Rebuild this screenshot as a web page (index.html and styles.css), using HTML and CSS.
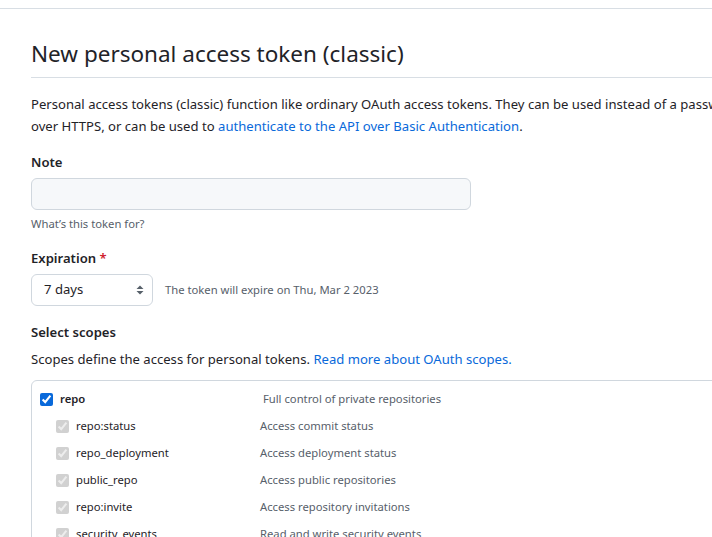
FILE: index.html
```html
<!DOCTYPE html>
<html lang="en">
<head>
<meta charset="utf-8">
<title>New personal access token (classic)</title>
<link rel="stylesheet" href="styles.css">
</head>
<body>
<div class="topbar"></div>
<main class="main">
  <div class="subhead">
    <h1 class="subhead-title">New personal access token (classic)</h1>
  </div>
  <p class="intro">Personal access tokens (classic) function like ordinary OAuth access tokens. They can be used instead of a password for Git<br>over HTTPS, or can be used to <a href="#" class="link">authenticate to the API over Basic Authentication</a>.</p>

  <div class="form-group">
    <label class="form-label">Note</label>
    <div class="input"></div>
    <p class="note">What’s this token for?</p>
  </div>

  <div class="form-group form-group-exp">
    <label class="form-label">Expiration <span class="req">*</span></label>
    <div class="exp-row">
      <div class="select">
        <span>7 days</span>
        <svg class="select-arrows" width="8" height="12" viewBox="0 0 8 12"><path d="M4 1.5 7.5 5h-7z M4 10.5 0.5 7h7z" fill="#57606a"/></svg>
      </div>
      <span class="exp-note">The token will expire on Thu, Mar 2 2023</span>
    </div>
  </div>

  <div class="form-group form-group-scopes">
    <label class="form-label">Select scopes</label>
    <p class="scopes-desc">Scopes define the access for personal tokens. <a href="#" class="link">Read more about OAuth scopes.</a></p>
    <div class="scopes-box">
      <div class="scope-row scope-parent">
        <label class="scope-name"><input type="checkbox" checked><span>repo</span></label>
        <span class="scope-desc">&nbsp;Full control of private repositories</span>
      </div>
      <div class="scope-row scope-child">
        <label class="scope-name"><input type="checkbox" checked disabled><span>repo:status</span></label>
        <span class="scope-desc">Access commit status</span>
      </div>
      <div class="scope-row scope-child">
        <label class="scope-name"><input type="checkbox" checked disabled><span>repo_deployment</span></label>
        <span class="scope-desc">Access deployment status</span>
      </div>
      <div class="scope-row scope-child">
        <label class="scope-name"><input type="checkbox" checked disabled><span>public_repo</span></label>
        <span class="scope-desc">Access public repositories</span>
      </div>
      <div class="scope-row scope-child">
        <label class="scope-name"><input type="checkbox" checked disabled><span>repo:invite</span></label>
        <span class="scope-desc">Access repository invitations</span>
      </div>
      <div class="scope-row scope-child">
        <label class="scope-name"><input type="checkbox" checked disabled><span>security_events</span></label>
        <span class="scope-desc">Read and write security events</span>
      </div>
    </div>
  </div>
</main>
</body>
</html>
```

FILE: styles.css
```css
html, body {
  overflow: hidden;
}
body {
  margin: 0;
  font-family: "Segoe UI", "Noto Sans", sans-serif;
  font-size: 13.1px;
  line-height: 1.5;
  color: #1f2328;
  background: #fff;
}
.topbar {
  height: 8px;
  border-bottom: 1px solid #d8dee4;
}
.main {
  padding-left: 31px;
  width: 1000px;
}
.subhead {
  margin-top: 29px;
  padding-bottom: 8px;
  border-bottom: 1px solid #d8dee4;
  margin-bottom: 15px;
  width: 900px;
}
.subhead-title {
  margin: 0;
  font-size: 22.5px;
  font-weight: 400;
  line-height: 31px;
}
.intro {
  margin: 0;
  line-height: 22px;
  white-space: nowrap;
}
.link {
  color: #0969da;
  text-decoration: none;
}
.form-group {
  margin-top: 15px;
}
.form-label {
  display: block;
  font-weight: 600;
  line-height: 21px;
}
.input {
  margin-top: 5px;
  width: 438px;
  height: 30px;
  background: #f6f8fa;
  border: 1px solid #d0d7de;
  border-radius: 6px;
}
.note {
  margin: 5px 0 0;
  font-size: 11.25px;
  line-height: 18px;
  color: #57606a;
}
.form-group-exp {
  margin-top: 15px;
}
.req {
  color: #cf222e;
}
.exp-row {
  margin-top: 5px;
  display: flex;
  align-items: center;
  gap: 12px;
}
.select {
  box-sizing: border-box;
  width: 122px;
  height: 32px;
  border: 1px solid #d0d7de;
  border-radius: 6px;
  padding: 0 8px 0 12px;
  display: flex;
  align-items: center;
  justify-content: space-between;
}
.exp-note {
  font-size: 11.25px;
  color: #57606a;
}
.form-group-scopes {
  margin-top: 16px;
}
.scopes-desc {
  margin: 6px 0 0;
  line-height: 21px;
}
.scopes-box {
  margin-top: 10px;
  width: 900px;
  border: 1px solid #d0d7de;
  border-radius: 6px;
  padding: 5px 0 10px 8px;
}
.scope-row {
  display: grid;
  grid-template-columns: 220px 1fr;
  height: 27px;
  align-items: center;
  font-size: 11.25px;
}
.scope-child {
  padding-left: 16px;
  grid-template-columns: 204px 1fr;
}
.scope-name {
  display: flex;
  align-items: center;
  color: #1f2328;
}
.scope-parent .scope-name {
  font-weight: 600;
}
.scope-name input {
  margin: 0 7px 0 0;
  width: 13px;
  height: 13px;
  accent-color: #0969da;
}
.scope-desc {
  color: #57606a;
}
```
